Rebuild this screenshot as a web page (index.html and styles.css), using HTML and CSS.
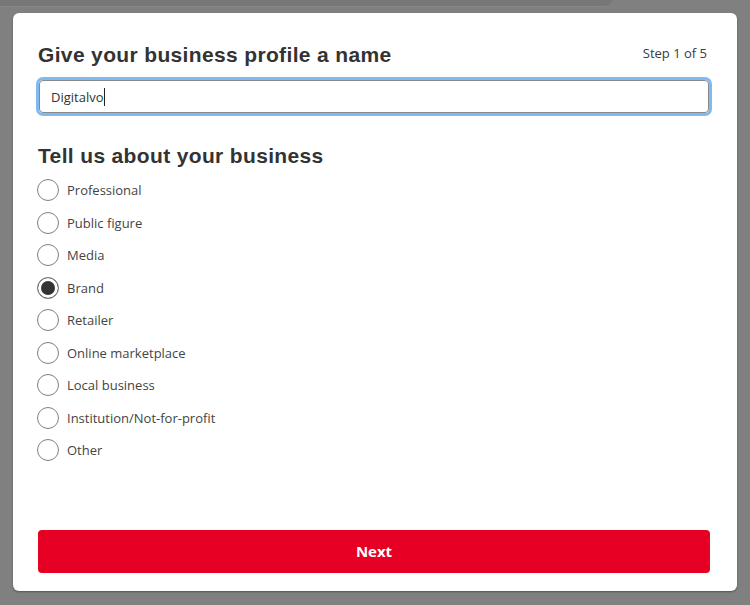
FILE: index.html
```html
<!DOCTYPE html>
<html lang="en">
<head>
<meta charset="utf-8">
<title>Business profile</title>
<link rel="stylesheet" href="styles.css">
</head>
<body>
<div class="backdrop-strip"></div>
<div class="modal">
  <div class="modal-header">
    <h1 class="title">Give your business profile a name</h1>
    <span class="step">Step 1 of 5</span>
  </div>
  <div class="name-input">Digitalvo<span class="caret"></span></div>
  <h2 class="subtitle">Tell us about your business</h2>
  <ul class="options">
    <li class="option"><span class="radio"></span><span class="label">Professional</span></li>
    <li class="option"><span class="radio"></span><span class="label">Public figure</span></li>
    <li class="option"><span class="radio"></span><span class="label">Media</span></li>
    <li class="option"><span class="radio checked"></span><span class="label">Brand</span></li>
    <li class="option"><span class="radio"></span><span class="label">Retailer</span></li>
    <li class="option"><span class="radio"></span><span class="label">Online marketplace</span></li>
    <li class="option"><span class="radio"></span><span class="label">Local business</span></li>
    <li class="option"><span class="radio"></span><span class="label">Institution/Not-for-profit</span></li>
    <li class="option"><span class="radio"></span><span class="label">Other</span></li>
  </ul>
  <button class="next-btn" type="button">Next</button>
</div>
</body>
</html>
```

FILE: styles.css
```css
html, body {
  margin: 0;
  padding: 0;
}
body {
  background: #808080;
  width: 750px;
  height: 605px;
  overflow: hidden;
  font-family: "Open Sans", "Noto Sans", sans-serif;
  color: #333;
}
.backdrop-strip {
  width: 612px;
  height: 6px;
  background: #777777;
  border-bottom-right-radius: 6px;
  border-bottom: 1px solid #858585;
}
.modal {
  margin: 6px 0 0 13px;
  width: 724px;
  height: 578px;
  box-sizing: border-box;
  background: #fff;
  border-radius: 6px;
  box-shadow: 0 1px 2px rgba(0,0,0,0.35);
  padding: 30px 27px 18px 25px;
  display: flex;
  flex-direction: column;
}
.modal-header {
  display: flex;
  justify-content: space-between;
  align-items: flex-start;
}
.title, .subtitle {
  margin: 0;
  font-family: "Liberation Sans", Arial, sans-serif;
  font-weight: bold;
  font-size: 21px;
  letter-spacing: 0.35px;
  line-height: 24px;
  color: #333;
}
.step {
  font-size: 13px;
  line-height: 18px;
  margin-top: 1px;
  margin-right: 3px;
  color: #3a3a3a;
}
.name-input {
  margin: 13px 1px 3px 1px;
  height: 33px;
  box-sizing: border-box;
  border: 1px solid #8a8a8a;
  border-radius: 4px;
  box-shadow: 0 0 0 3px #7fbbf2;
  padding: 0 11px;
  font-size: 13px;
  color: #333;
  display: flex;
  align-items: center;
}
.caret {
  display: inline-block;
  width: 1px;
  height: 18px;
  background: #222;
}
.subtitle {
  margin-top: 28px;
}
.options {
  list-style: none;
  margin: 6px 0 0 0;
  padding: 0;
}
.option {
  height: 32.5px;
  display: flex;
  align-items: center;
}
.radio {
  width: 22px;
  height: 22px;
  box-sizing: border-box;
  border: 1px solid #808080;
  border-radius: 50%;
  margin-left: -1px;
  margin-right: 8px;
  background: #fff;
}
.radio.checked {
  background: #333;
  box-shadow: inset 0 0 0 3px #fff;
}
.label {
  font-size: 13px;
  color: #444;
}
.next-btn {
  margin-top: auto;
  height: 43px;
  width: 100%;
  border: none;
  border-radius: 4px;
  background: #e60023;
  color: #fff;
  font-family: "Open Sans", "Noto Sans", sans-serif;
  font-weight: bold;
  font-size: 15px;
  padding: 0 0 2px 0;
}
```
